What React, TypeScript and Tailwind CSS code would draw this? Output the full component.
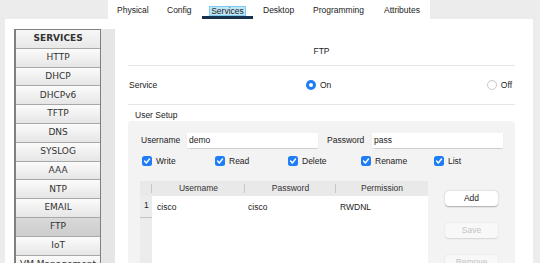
import React from "react";

const sideItems = ["HTTP","DHCP","DHCPv6","TFTP","DNS","SYSLOG","AAA","NTP","EMAIL","FTP","IoT","VM Management"];

function Check({ label }: { label: string }) {
  return (
    <div className="w-[73px] flex items-center gap-[4px]">
      <div className="w-[10px] h-[10px] rounded-[2.5px] bg-[#1f7df6] flex items-center justify-center">
        <svg width="10" height="10" viewBox="0 0 10 10">
          <path d="M2.6 5.1 L4.3 6.9 L7.5 3.1" stroke="white" strokeWidth="1.5" fill="none" strokeLinecap="round" strokeLinejoin="round" />
        </svg>
      </div>
      <span>{label}</span>
    </div>
  );
}

export default function App() {
  return (
    <div className="w-[540px] h-[263px] overflow-hidden bg-[#ececec] flex flex-col font-['Liberation_Sans',Arial,sans-serif] text-[8.5px] text-[#222]">
      {/* tabs */}
      <div className="h-[19px] flex pl-[108px] shrink-0">
        <div className="w-[322px] bg-white flex h-full pt-[2px]">
          <div className="w-[52px] pl-[9px] flex items-center">Physical</div>
          <div className="w-[42px] pl-[7px] flex items-center">Config</div>
          <div className="w-[51px] flex items-center justify-center relative">
            <span className="bg-[#bfe6f7] border border-[#7fcbef] px-[1px] leading-[8px]">Services</span>
            <div className="absolute left-0 right-0 bottom-0 h-[3px] bg-[#17324f]" />
          </div>
          <div className="w-[60px] pl-[10px] flex items-center">Desktop</div>
          <div className="w-[71px] flex items-center">Programming</div>
          <div className="flex-1 flex items-center">Attributes</div>
        </div>
      </div>
      {/* body */}
      <div className="flex-1 ml-[5px] w-[528px] bg-white flex">
        {/* sidebar */}
        <div className="ml-[9px] mt-[10px] w-[101px] flex shrink-0">
          <div className="w-[88px] border-l-[2px] border-r border-t border-[#808080] flex flex-col font-['DejaVu_Sans',Verdana,sans-serif] text-[9px] text-[#333]">
            <div className="h-[18.8px] shrink-0 border-b border-[#a8a8a8] bg-linear-to-b from-[#f7f7f7] to-[#e8e8e8] flex items-center justify-center font-bold">SERVICES</div>
            {sideItems.map((s) => (
              <div
                key={s}
                className={
                  s === "FTP"
                    ? "h-[18.8px] shrink-0 border-b border-[#a8a8a8] bg-linear-to-b from-[#d9d9d9] to-[#cdcdcd] flex items-center justify-center whitespace-nowrap"
                    : "h-[18.8px] shrink-0 border-b border-[#a8a8a8] bg-linear-to-b from-[#fbfbfb] to-[#e6e6e6] flex items-center justify-center whitespace-nowrap"
                }
              >
                {s}
              </div>
            ))}
          </div>
          <div className="w-[14px] bg-[#e6e6e6]" />
        </div>
        {/* main */}
        <div className="ml-[13px] w-[387px] flex flex-col">
          <div className="h-[47px] shrink-0 border-b border-[#e6e6e6] flex items-end justify-center pb-[9px] leading-[10px]">FTP</div>
          <div className="h-[39px] shrink-0 border-b border-[#e6e6e6] flex items-center pl-[1px]">
            <div className="w-[177px]">Service</div>
            <div className="w-[10px] h-[10px] rounded-full bg-[#1f7df6] flex items-center justify-center">
              <div className="w-[4px] h-[4px] rounded-full bg-white" />
            </div>
            <span className="ml-[4px]">On</span>
            <div className="flex-1" />
            <div className="w-[10px] h-[10px] rounded-full bg-white border border-[#c8c8c8]" />
            <span className="ml-[4px] mr-[3px]">Off</span>
          </div>
          <div className="h-[16px] shrink-0 pl-[7px] pt-[5px] leading-[10px]">User Setup</div>
          <div className="flex-1 bg-[#f3f3f3] rounded-[4px] pl-[12px] pt-[12px] flex flex-col">
            <div className="h-[15px] flex items-center">
              <div className="w-[47px] pl-[1px]">Username</div>
              <div className="w-[131px] h-[15px] bg-white pl-[2px] flex items-center shadow-[0_0.5px_1px_rgba(0,0,0,0.15)]">demo</div>
              <div className="w-[54px] pl-[9px]">Password</div>
              <div className="w-[131px] h-[15px] bg-white pl-[2px] flex items-center shadow-[0_0.5px_1px_rgba(0,0,0,0.15)]">pass</div>
            </div>
            <div className="mt-[8px] h-[10px] flex pl-[2px]">
              <Check label="Write" />
              <Check label="Read" />
              <Check label="Delete" />
              <Check label="Rename" />
              <Check label="List" />
            </div>
            <div className="mt-[15px] flex flex-1">
              <div className="w-[288px] flex flex-col bg-white">
                <div className="h-[15px] flex bg-[#e9e9e9] text-[#333]">
                  <div className="w-[12px] flex items-center"><div className="ml-auto w-px h-[9px] bg-[#c8c8c8]" /></div>
                  <div className="w-[93px] flex items-center justify-center relative">
                    Username
                    <div className="absolute right-0 top-[3px] w-px h-[9px] bg-[#c8c8c8]" />
                  </div>
                  <div className="w-[91px] flex items-center justify-center relative">
                    Password
                    <div className="absolute right-0 top-[3px] w-px h-[9px] bg-[#c8c8c8]" />
                  </div>
                  <div className="flex-1 flex items-center justify-center">Permission</div>
                </div>
                <div className="flex flex-1">
                  <div className="w-[12px] bg-[#ececec] flex flex-col">
                    <div className="h-[22px] border-b border-[#c4c4c4] pl-[4px] pt-[4px] leading-[10px]">1</div>
                  </div>
                  <div className="flex-1 flex h-[22px] items-center">
                    <div className="w-[93px] pl-[5px]">cisco</div>
                    <div className="w-[91px] pl-[3px]">cisco</div>
                    <div className="flex-1 pl-[4px]">RWDNL</div>
                  </div>
                </div>
              </div>
              <div className="ml-[17px] mt-[10px] w-[53px] flex flex-col gap-[17px]">
                <div className="h-[15px] bg-white rounded-[4px] shadow-[0_0.5px_1.5px_rgba(0,0,0,0.3)] flex items-center justify-center">Add</div>
                <div className="h-[15px] bg-[#f8f8f8] rounded-[4px] shadow-[0_0.5px_1.5px_rgba(0,0,0,0.12)] flex items-center justify-center text-[#c4c4c4]">Save</div>
                <div className="h-[15px] bg-[#f8f8f8] rounded-[4px] shadow-[0_0.5px_1.5px_rgba(0,0,0,0.12)] flex items-center justify-center text-[#c4c4c4]">Remove</div>
              </div>
            </div>
          </div>
        </div>
      </div>
    </div>
  );
}
